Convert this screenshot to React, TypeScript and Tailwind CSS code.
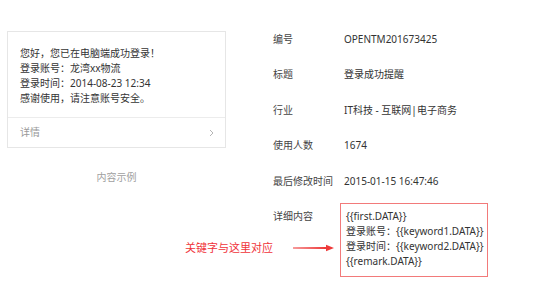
import React from 'react';

const rows: [string, string][] = [
  ['编号', 'OPENTM201673425'],
  ['标题', '登录成功提醒'],
  ['行业', 'IT科技 - 互联网|电子商务'],
  ['使用人数', '1674'],
  ['最后修改时间', '2015-01-15 16:47:46'],
];

const detailLines = [
  '{{first.DATA}}',
  '登录账号：{{keyword1.DATA}}',
  '登录时间：{{keyword2.DATA}}',
  '{{remark.DATA}}',
];

const App: React.FC = () => {
  return (
    <div
      className="relative flex w-[554px] h-[291px] bg-white text-[10px] text-[#333]"
      style={{ fontFamily: '"Noto Sans", "Noto Sans CJK SC", sans-serif' }}
    >
      {/* message preview */}
      <div className="pl-[7px] pt-[31px] w-[226px] shrink-0">
        <div className="border border-[#e6e6e6] bg-white">
          <div className="px-3 pt-[14px] pb-[11px] leading-[15px]">
            <p>您好，您已在电脑端成功登录！</p>
            <p>登录账号：龙湾xx物流</p>
            <p>登录时间：2014-08-23 12:34</p>
            <p>感谢使用，请注意账号安全。</p>
          </div>
          <div className="flex items-center justify-between border-t border-[#ececec] h-[30px] pl-3 pr-[11px] text-[#999]">
            <span>详情</span>
            <svg width="5" height="8" viewBox="0 0 5 8" fill="none">
              <path d="M1 1l3 3-3 3" stroke="#b5b5b5" strokeWidth="1" />
            </svg>
          </div>
        </div>
        <p className="mt-[22px] text-center leading-[14px] text-[#a0a0a0]">内容示例</p>
      </div>

      {/* template info */}
      <div className="ml-[47px] pt-[31.5px] flex flex-col">
        {rows.map(([label, value]) => (
          <div key={label} className="grid grid-cols-[71px_1fr] h-[15px] leading-[15px] mb-[20.6px]">
            <span className="text-[#444]">{label}</span>
            <span>{value}</span>
          </div>
        ))}
        <div className="grid grid-cols-[71px_1fr] -mt-[6px]">
          <span className="mt-[5.5px] leading-[15px] text-[#444]">详细内容</span>
          <div className="-ml-[4px] w-[148px] h-[74px] border border-[#f27a7a] pl-[5px] pt-[4.5px] leading-[15px]">
            {detailLines.map((line) => (
              <p key={line}>{line}</p>
            ))}
          </div>
        </div>
      </div>

      {/* annotation */}
      <div className="absolute left-[185px] top-[240px] flex items-center">
        <span className="text-[11px] leading-[16px] text-[#f0333a]">关键字与这里对应</span>
        <svg className="ml-[20px]" width="41" height="8" viewBox="0 0 41 8">
          <polygon points="0,3.6 33,3 33,0.8 41,4 33,7.2 33,5 0,4.4" fill="#ee3a3a" />
        </svg>
      </div>
    </div>
  );
};

export default App;
